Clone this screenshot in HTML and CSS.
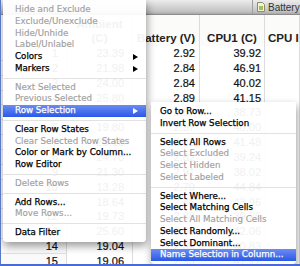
FILE: index.html
```html
<!DOCTYPE html>
<html>
<head>
<meta charset="utf-8">
<link rel="stylesheet" href="styles.css">
</head>
<body>
<div class="window">
  <div class="toolbar">
    <div class="tab">
      <svg class="tab-icon" width="8" height="10" viewBox="0 0 8 10">
        <path d="M0.5 0.5 H5.5 L7.5 2.5 V9.5 H0.5 Z" fill="#f4f1d8" stroke="#8a8a70" stroke-width="1"/>
        <rect x="2" y="4" width="4" height="4" fill="#9cc25a"/>
      </svg>
      <span>Battery -</span>
    </div>
  </div>
  <div class="table">
    <div class="hcell c0"></div>
    <div class="hcell c1">Ambient<br>(C)</div>
    <div class="hcell c2">Battery (V)</div>
    <div class="hcell c3">CPU1 (C)</div>
    <div class="hcell c4">CPU I</div>

    <div class="cell rn">1</div><div class="cell v1">23.39</div><div class="cell v2">2.92</div><div class="cell v3">39.92</div><div class="cell v4"></div>
    <div class="cell rn">2</div><div class="cell v1">21.98</div><div class="cell v2">2.84</div><div class="cell v3">46.91</div><div class="cell v4"></div>
    <div class="cell rn">3</div><div class="cell v1">24.00</div><div class="cell v2">2.84</div><div class="cell v3">40.02</div><div class="cell v4"></div>
    <div class="cell rn">4</div><div class="cell v1">25.80</div><div class="cell v2">2.89</div><div class="cell v3">41.15</div><div class="cell v4"></div>
    <div class="cell rn">5</div><div class="cell v1">22.47</div><div class="cell v2">2.87</div><div class="cell v3">38.73</div><div class="cell v4"></div>
    <div class="cell rn">6</div><div class="cell v1">19.80</div><div class="cell v2">2.97</div><div class="cell v3">40.00</div><div class="cell v4"></div>
    <div class="cell rn">7</div><div class="cell v1">20.15</div><div class="cell v2">2.89</div><div class="cell v3">41.48</div><div class="cell v4"></div>
    <div class="cell rn">8</div><div class="cell v1">24.78</div><div class="cell v2">2.82</div><div class="cell v3">39.24</div><div class="cell v4"></div>
    <div class="cell rn">9</div><div class="cell v1">21.30</div><div class="cell v2">2.91</div><div class="cell v3">38.02</div><div class="cell v4"></div>
    <div class="cell rn">10</div><div class="cell v1">13.28</div><div class="cell v2">2.79</div><div class="cell v3">44.84</div><div class="cell v4"></div>
    <div class="cell rn">11</div><div class="cell v1">18.64</div><div class="cell v2">2.86</div><div class="cell v3">43.96</div><div class="cell v4"></div>
    <div class="cell rn">12</div><div class="cell v1">19.73</div><div class="cell v2">2.88</div><div class="cell v3">39.20</div><div class="cell v4"></div>
    <div class="cell rn">13</div><div class="cell v1">25.60</div><div class="cell v2">2.90</div><div class="cell v3">42.06</div><div class="cell v4"></div>
    <div class="cell rn">14</div><div class="cell v1">19.04</div><div class="cell v2">2.85</div><div class="cell v3">40.83</div><div class="cell v4"></div>
    <div class="cell rn">15</div><div class="cell v1">19.06</div><div class="cell v2">2.93</div><div class="cell v3">41.12</div><div class="cell v4"></div>
  </div>

  <div class="menu main-menu">
    <div class="item dis">Hide and Exclude</div>
    <div class="item dis">Exclude/Unexclude</div>
    <div class="item dis">Hide/Unhide</div>
    <div class="item dis">Label/Unlabel</div>
    <div class="item">Colors<span class="arrow"></span></div>
    <div class="item">Markers<span class="arrow"></span></div>
    <div class="sep"></div>
    <div class="item dis">Next Selected</div>
    <div class="item dis">Previous Selected</div>
    <div class="item hl">Row Selection<span class="arrow"></span></div>
    <div class="sep"></div>
    <div class="item">Clear Row States</div>
    <div class="item dis">Clear Selected Row States</div>
    <div class="item">Color or Mark by Column...</div>
    <div class="item">Row Editor</div>
    <div class="sep"></div>
    <div class="item dis">Delete Rows</div>
    <div class="sep"></div>
    <div class="item">Add Rows...</div>
    <div class="item dis">Move Rows...</div>
    <div class="sep"></div>
    <div class="item">Data Filter</div>
  </div>

  <div class="menu sub-menu">
    <div class="item">Go to Row...</div>
    <div class="item">Invert Row Selection</div>
    <div class="sep"></div>
    <div class="item">Select All Rows</div>
    <div class="item dis">Select Excluded</div>
    <div class="item dis">Select Hidden</div>
    <div class="item dis">Select Labeled</div>
    <div class="sep"></div>
    <div class="item">Select Where...</div>
    <div class="item">Select Matching Cells</div>
    <div class="item dis">Select All Matching Cells</div>
    <div class="item">Select Randomly...</div>
    <div class="item">Select Dominant...</div>
    <div class="item hl">Name Selection in Column...</div>
  </div>
</div>
</body>
</html>
```
FILE: styles.css
```css
html, body {
  margin: 0;
  padding: 0;
  background: #ffffff;
}

.window {
  position: relative;
  width: 300px;
  height: 266px;
  overflow: hidden;
  box-sizing: border-box;
  border-left: 1px solid #5a78c8;
  border-bottom: 2px solid #4a6ad8;
  background: #ffffff;
}

.toolbar {
  height: 15px;
  box-sizing: border-box;
  background: linear-gradient(#ececec, #c4c4c4 80%, #a8a8a8);
  border-bottom: 1px solid #8c8c8c;
  display: flex;
  justify-content: flex-end;
}

.tab {
  display: flex;
  align-items: center;
  gap: 3px;
  padding-left: 4px;
  border-left: 1px solid #a0a0a0;
  width: 43px;
  font: 10px "Liberation Sans", Arial, sans-serif;
  color: #333;
  white-space: nowrap;
  overflow: hidden;
}

.tab-icon {
  flex: none;
}

.table {
  display: grid;
  grid-template-columns: 66px 66px 67px 65px 1fr;
  grid-template-rows: 31px repeat(15, 14.86px);
  font-family: "Liberation Sans", Arial, sans-serif;
  color: #111;
}

.hcell {
  display: flex;
  align-items: flex-end;
  justify-content: center;
  text-align: center;
  font-weight: bold;
  font-size: 11.5px;
  line-height: 14px;
  padding-bottom: 1px;
  border-right: 1px solid #dcdcdc;
  color: #222;
  white-space: nowrap;
  background: #fbfbfa;
}

.hcell.c4 {
  justify-content: flex-start;
  padding-left: 3px;
}

.cell {
  font-size: 11px;
  line-height: 14.86px;
  text-align: right;
  border-right: 1px solid #dcdcdc;
  white-space: nowrap;
  -webkit-text-stroke: 0.2px currentColor;
}

.cell.rn {
  padding-right: 8px;
  background: #fafafa;
  border-bottom: 1px solid #e0e0e0;
  box-sizing: border-box;
}

.cell.v1 { padding-right: 8px; }
.cell.v2 { padding-right: 4px; }
.cell.v3 { padding-right: 3px; }

.menu {
  position: absolute;
  background: rgba(255, 255, 255, 0.94);
  box-shadow: 1px 4px 9px rgba(0, 0, 0, 0.4);
  padding: 4px 0 3px;
  font-family: "DejaVu Sans", Verdana, sans-serif;
  font-size: 8.7px;
  border-radius: 0 0 4px 4px;
}

.main-menu {
  left: 2px;
  top: 0;
  width: 143px;
}

.sub-menu {
  left: 150px;
  top: 102px;
  width: 145px;
}

.item {
  position: relative;
  height: 11.75px;
  line-height: 11.75px;
  padding-left: 12px;
  color: #000;
  white-space: nowrap;
  -webkit-text-stroke: 0.25px currentColor;
}

.sub-menu .item {
  padding-left: 9px;
}

.item.dis {
  color: #a0a0a0;
  -webkit-text-stroke: 0.15px currentColor;
}

.item.hl {
  background: linear-gradient(#6a8cf2, #2c58e8);
  color: #fff;
}

.arrow {
  position: absolute;
  right: 8px;
  top: 3px;
  width: 0;
  height: 0;
  border-left: 5px solid #000;
  border-top: 3px solid transparent;
  border-bottom: 3px solid transparent;
}

.item.hl .arrow {
  border-left-color: #fff;
}

.sep {
  height: 7px;
  display: flex;
  align-items: center;
}

.sep::after {
  content: "";
  flex: 1;
  height: 1px;
  background: #e2e2e2;
}
```
